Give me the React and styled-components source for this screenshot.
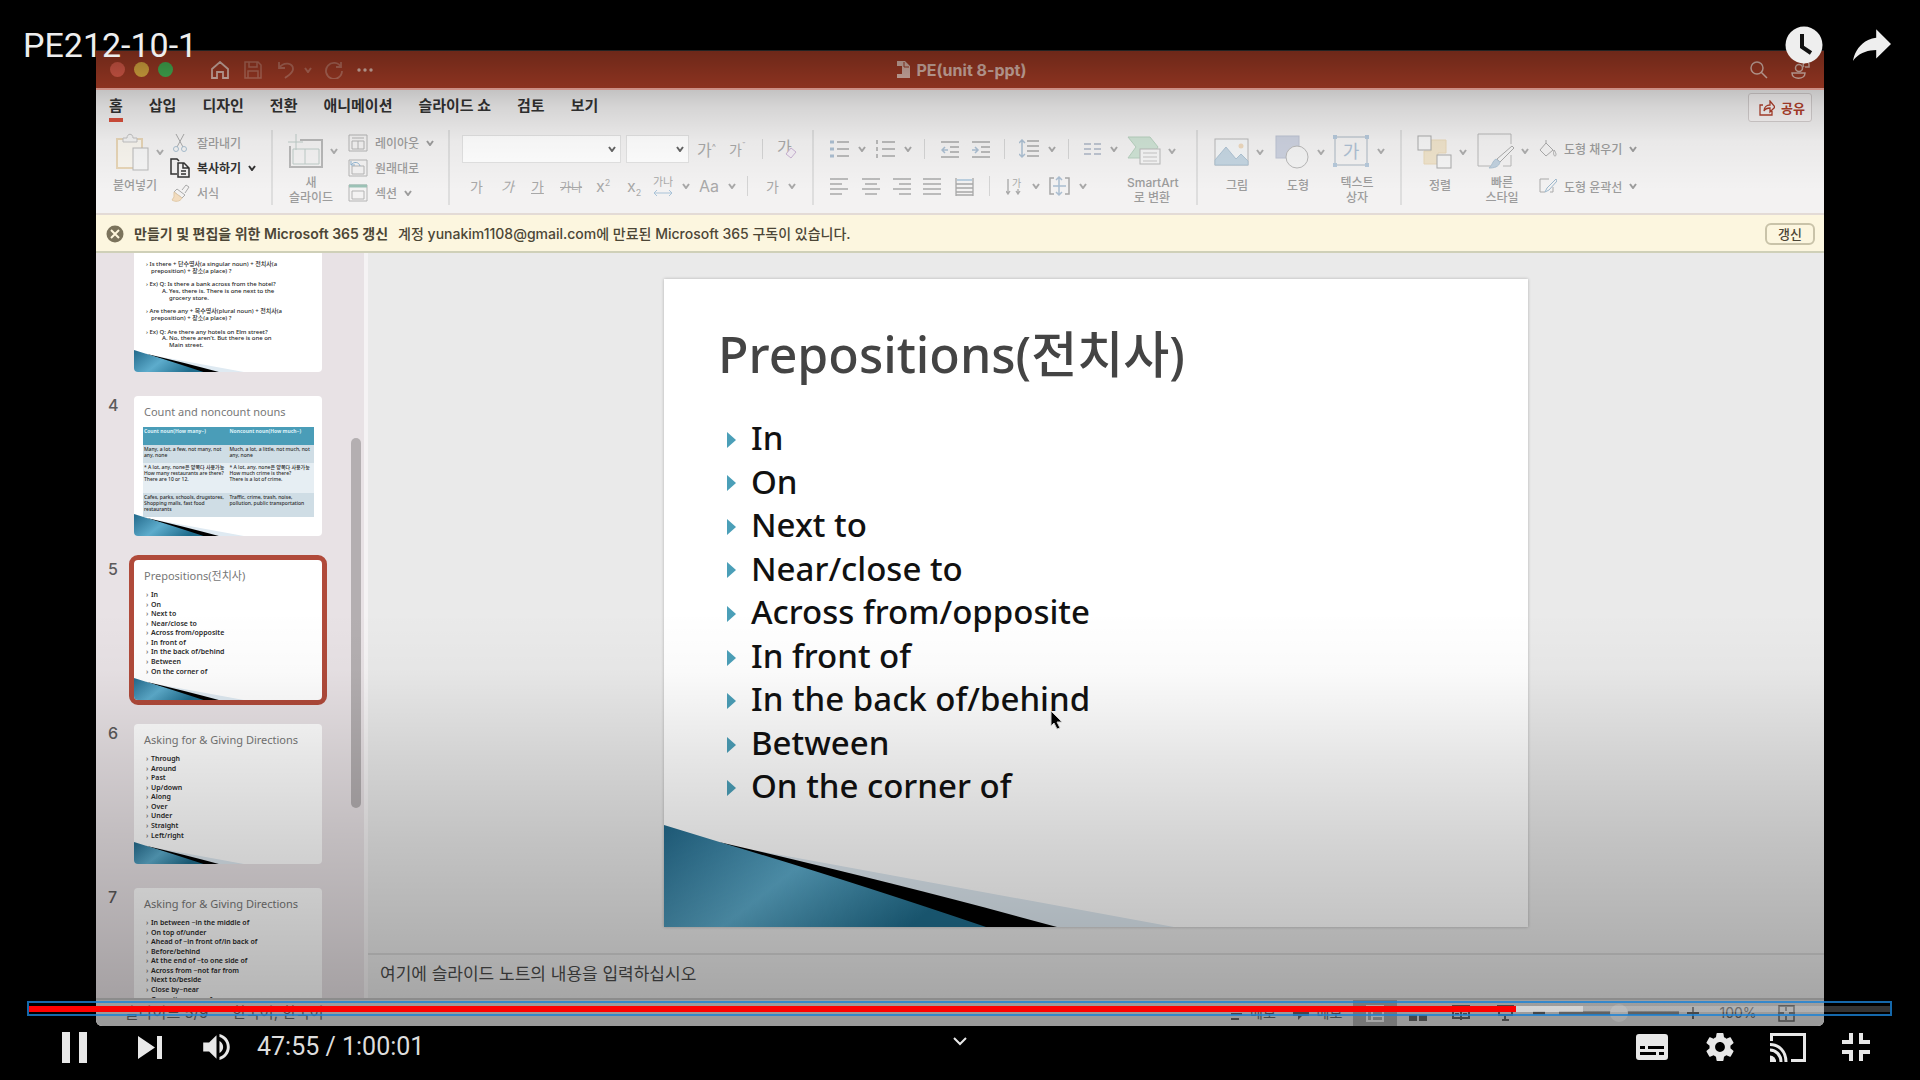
import React from "react";
import styled, { createGlobalStyle } from "styled-components";

const uiFont = `"Inter", "Noto Sans CJK KR", sans-serif`;
const slideFont = `"Noto Sans", "Noto Sans CJK KR", sans-serif`;

const GlobalStyle = createGlobalStyle`
  * { box-sizing: border-box; }
  body { margin: 0; background: #000; overflow: hidden; }
  button { font: inherit; color: inherit; background: none; border: 0; padding: 0; cursor: pointer; }
  svg { display: block; flex: none; }
`;

/* ---------- player shell ---------- */

const Player = styled.main`
  position: relative;
  display: flex;
  height: 100vh;
  background: #000;
  padding: 50px 5% 54px;
`;

const Video = styled.section`
  position: relative;
  flex: 1;
  min-width: 0;
  display: flex;
  flex-direction: column;
  overflow: hidden;
  border-top: 1px solid #222;
  border-radius: 0 0 6px 6px;
  background: #f3f2f2;
  font-family: ${uiFont};
  &::after {
    content: "";
    position: absolute;
    inset: 0;
    pointer-events: none;
    background: linear-gradient(
      to bottom,
      rgba(0, 0, 0, 0.38) 0,
      rgba(0, 0, 0, 0.2) 38px,
      rgba(0, 0, 0, 0.12) 56px,
      rgba(0, 0, 0, 0.04) 90px,
      rgba(0, 0, 0, 0) 140px,
      rgba(0, 0, 0, 0) 560px,
      rgba(0, 0, 0, 0.02) 620px,
      rgba(0, 0, 0, 0.1) 710px,
      rgba(0, 0, 0, 0.17) 790px,
      rgba(0, 0, 0, 0.23) 876px,
      rgba(0, 0, 0, 0.31) 976px
    );
  }
`;

const TopOverlay = styled.header`
  position: absolute;
  top: 0;
  left: 0;
  right: 0;
  display: flex;
  align-items: center;
  padding: 16px 14px 0 23px;
  height: 74px;
  color: #eee;
  font-family: Roboto, sans-serif;
`;

const VideoTitle = styled.h1`
  flex: 1;
  margin: 0;
  font-size: 34px;
  font-weight: 400;
  line-height: 40px;
`;

const PlayerButton = styled.button`
  width: ${(p) => p.$w || 68}px;
  height: 54px;
  display: flex;
  align-items: center;
  justify-content: center;
  color: #e8e8e8;
`;

const BottomOverlay = styled.footer`
  position: absolute;
  left: 27px;
  right: 28px;
  bottom: 0;
  height: 79px;
  font-family: Roboto, sans-serif;
`;

const Progress = styled.input`
  appearance: none;
  display: block;
  width: 100%;
  height: 15px;
  margin: 0;
  border: 2px solid rgba(26, 130, 214, 0.8);
  background: linear-gradient(
      to right,
      #f00 0 ${(p) => p.$played}%,
      rgba(255, 255, 255, 0.55) ${(p) => p.$played}% ${(p) => p.$loaded}%,
      rgba(255, 255, 255, 0.2) ${(p) => p.$loaded}%
    )
    center / 100% 6px no-repeat;
  &::-webkit-slider-thumb { appearance: none; width: 1px; height: 1px; }
`;

const Controls = styled.div`
  display: grid;
  grid-template-columns: 1fr auto 1fr;
  height: 62px;
`;

const ControlSide = styled.div`
  display: flex;
  align-items: center;
  padding-right: 2px;
  justify-content: ${(p) => (p.$end ? "flex-end" : "flex-start")};
`;

const Time = styled.span`
  margin-left: 3px;
  font-size: 25px;
  line-height: 30px;
  color: #ddd;
`;

/* ---------- presentation window ---------- */

const TitleBar = styled.div`
  display: grid;
  grid-template-columns: 1fr auto 1fr;
  align-items: center;
  height: 39px;
  padding: 0 12px 0 14px;
  background: #b04028;
  border-bottom: 2px solid #ffb5a8;
  color: #f0c8bc;
`;

const BarSide = styled.div`
  display: flex;
  align-items: center;
  justify-content: ${(p) => (p.$end ? "flex-end" : "flex-start")};
  gap: ${(p) => p.$gap || 0}px;
`;

const Light = styled.button`
  width: 15px;
  height: 15px;
  margin-right: 9px;
  border-radius: 50%;
  background: ${(p) => p.$c};
`;

const QuickButton = styled.button`
  margin-left: ${(p) => p.$ml || 0}px;
  opacity: ${(p) => (p.$dim ? 0.4 : 1)};
`;

const DocTitle = styled.h2`
  display: flex;
  align-items: center;
  gap: 7px;
  margin: 0;
  font: 700 16px/20px ${uiFont};
`;

const TabRow = styled.nav`
  display: flex;
  align-items: flex-start;
  height: 40px;
  padding: 4px 13px 0;
  color: #333;
`;

const Tab = styled.a`
  display: block;
  margin-right: 26px;
  padding: 1px 0 1px;
  font-size: 15px;
  font-weight: 700;
  line-height: 22px;
  color: inherit;
  text-decoration: none;
  border-bottom: 4px solid ${(p) => (p.$on ? "#d9503c" : "transparent")};
`;

const ShareButton = styled.button`
  display: flex;
  align-items: center;
  gap: 6px;
  height: 29px;
  margin: -1px -1px 0 auto;
  padding: 0 6px 0 10px;
  border: 1px solid #d5d0d0;
  border-radius: 3px;
  background: #fbf8f8;
  color: #b2402c;
  font-size: 13px;
  font-weight: 700;
`;

const Ribbon = styled.div`
  display: flex;
  height: 85px;
  border-bottom: 2px solid #e3dbd6;
  color: #9c9c9c;
`;

const Group = styled.div`
  display: flex;
  height: 75px;
  width: ${(p) => p.$w}px;
  padding-left: ${(p) => p.$pl || 0}px;
  border-right: ${(p) => (p.$last ? 0 : 2)}px solid #dedede;
`;

const BigTool = styled.button`
  display: flex;
  flex-direction: column;
  align-items: flex-start;
  width: ${(p) => p.$w}px;
`;

const BigIcon = styled.span`
  display: flex;
  align-items: center;
  gap: 7px;
  height: 44px;
  svg { opacity: 0.8; }
`;

const BigLabel = styled.span`
  width: ${(p) => p.$w || 46}px;
  padding-top: 4px;
  font-size: 12px;
  font-weight: 500;
  line-height: 15px;
  text-align: center;
  white-space: pre-line;
`;

const IconPad = styled.span`
  padding-left: 4px;
`;

const Column = styled.div`
  display: flex;
  flex-direction: column;
`;

const SmallTool = styled.button`
  display: flex;
  align-items: center;
  height: ${(p) => p.$h || 27}px;
  gap: 7px;
  font-size: 12px;
  font-weight: ${(p) => (p.$on ? 700 : 500)};
  color: ${(p) => (p.$on ? "#333" : "inherit")};
  white-space: nowrap;
`;

const ToolRow = styled.div`
  display: flex;
  align-items: center;
  height: 39px;
`;

const Tool = styled.button`
  display: flex;
  align-items: center;
  justify-content: flex-start;
  gap: 9px;
  width: ${(p) => p.$w}px;
  height: 26px;
  padding-left: ${(p) => p.$pl || 0}px;
  font-size: ${(p) => p.$fs || 14}px;
  font-style: ${(p) => (p.$italic ? "italic" : "normal")};
  text-decoration: ${(p) => p.$deco || "none"};
  white-space: nowrap;
  opacity: 0.85;
  sup, sub { font-size: 9px; line-height: 0; }
`;

const Rule = styled.span`
  width: 1px;
  height: 20px;
  margin-right: ${(p) => p.$mr}px;
  background: #d4d4d4;
`;

const SelectBox = styled.label`
  position: relative;
  display: block;
  width: ${(p) => p.$w}px;
  margin-right: ${(p) => p.$mr}px;
  svg { position: absolute; right: 5px; top: 11px; color: #666; pointer-events: none; }
`;

const Select = styled.select`
  appearance: none;
  display: block;
  width: 100%;
  height: 28px;
  border: 1px solid #e2e2e2;
  background: #fff;
`;

const Notice = styled.div`
  display: flex;
  align-items: center;
  height: 38px;
  padding: 1px 9px 0 10px;
  border-bottom: 2px solid #cfd0b8;
  background: #fcf6df;
  color: #4c4636;
  font-size: 14px;
  font-weight: 500;
  line-height: 20px;
  strong { margin: 0 10px; font-weight: 600; }
`;

const NoticeButton = styled.button`
  width: 50px;
  height: 22px;
  margin-left: auto;
  border: 2px solid #c9c3a9;
  border-radius: 6px;
  font-size: 13px;
  font-weight: 500;
  line-height: 16px;
`;

const Workspace = styled.div`
  flex: 1;
  min-height: 0;
  display: flex;
`;

const Panel = styled.aside`
  position: relative;
  width: 272px;
  overflow: hidden;
  background: #e8e2e5;
  border-right: 4px solid #f5f3f4;
`;

const Scrollbar = styled.span`
  position: absolute;
  top: 185px;
  right: 3px;
  width: 10px;
  height: 370px;
  border-radius: 5px;
  background: #b4afb1;
`;

const ThumbList = styled.ol`
  list-style: none;
  display: flex;
  flex-direction: column;
  gap: 24px;
  margin: -21px 0 0;
  padding: 0 0 0 12px;
`;

const ThumbItem = styled.li`
  display: flex;
  height: 140px;
`;

const ThumbNumber = styled.span`
  width: 26px;
  font-size: 16px;
  font-weight: 500;
  line-height: 18px;
  color: #5c5a5b;
`;

const Thumb = styled.a`
  position: relative;
  display: block;
  width: 188px;
  height: 140px;
  overflow: hidden;
  border-radius: 4px;
  background: #fff;
  color: #2a2a2a;
  text-decoration: none;
  font-family: ${slideFont};
  outline: ${(p) => (p.$on ? "5px solid #b04a3a" : "0")};
`;

const ThumbTitle = styled.h3`
  margin: 0;
  padding: 8px 0 0 10px;
  font-size: 11px;
  font-weight: 400;
  line-height: 16px;
  color: #777;
  white-space: nowrap;
`;

const ThumbBullets = styled.ul`
  list-style: none;
  margin: 0;
  padding: 6px 0 0 12px;
  font-size: 7px;
  font-weight: 600;
  line-height: 1.37;
  li::before { content: "›"; display: inline-block; width: 5px; color: #777; }
`;

const ThumbText = styled.p`
  margin: 0;
  padding-left: ${(p) => p.$in}px;
  padding-top: ${(p) => (p.$gap ? 7 : 0)}px;
  font-size: 6px;
  font-weight: 500;
  line-height: 1.11;
  white-space: nowrap;
`;

const ThumbBody = styled.div`
  padding-top: 29px;
`;

const MiniTable = styled.table`
  width: 171px;
  margin: 7px 0 0 9px;
  border-collapse: collapse;
  table-layout: fixed;
  font-size: 5px;
  line-height: 6px;
  th, td { padding: 1px; text-align: left; vertical-align: top; font-weight: 500; white-space: pre-line; }
  th { background: #4a9db8; color: #dff2f8; font-weight: 700; }
  tr:nth-child(even) td { background: #cfdde5; }
  tr:nth-child(odd) td { background: #e6eef3; }
`;

const MiniRow = styled.tr`
  height: ${(p) => p.$h}px;
`;

const Swoosh = styled.svg`
  position: absolute;
  left: 0;
  bottom: 0;
  width: 100%;
  height: auto;
`;

const Editor = styled.div`
  flex: 1;
  min-width: 0;
  display: flex;
  flex-direction: column;
  background: #eaeaea;
`;

const Stage = styled.div`
  flex: 1;
  min-height: 0;
  display: flex;
  align-items: center;
  justify-content: center;
`;

const Slide = styled.article`
  position: relative;
  width: 864px;
  aspect-ratio: 4 / 3;
  padding: 41px 54px;
  background: #fff;
  box-shadow: 0 0 3px rgba(0, 0, 0, 0.25);
  font-family: ${slideFont};
`;

const SlideTitle = styled.h2`
  margin: 0 0 28px;
  font-size: 50px;
  font-weight: 500;
  line-height: 68px;
  color: #444;
`;

const Bullets = styled.ul`
  list-style: none;
  margin: 0;
  padding: 0 0 0 9px;
  font-size: 33px;
  font-weight: 500;
  line-height: 1.32;
  color: #111;
`;

const Bullet = styled.li`
  display: flex;
  align-items: center;
  gap: 15px;
  &::before {
    content: "";
    margin-top: 4px;
    border-left: 9px solid #4b9fb8;
    border-top: 8px solid transparent;
    border-bottom: 8px solid transparent;
  }
`;

const Pointer = styled.svg`
  position: absolute;
  left: 386px;
  top: 431px;
`;

const Notes = styled.p`
  height: 45px;
  margin: 0;
  padding: 7px 12px;
  border-top: 2px solid #d6d6d6;
  font-size: 17px;
  line-height: 24px;
  color: #4a4a4a;
`;

const StatusBar = styled.div`
  display: flex;
  align-items: center;
  justify-content: space-between;
  height: 28px;
  padding: 0 29px;
  border-top: 2px solid #c4c4c4;
  background: #dedede;
  color: #666;
  font-size: 15px;
  line-height: 20px;
`;

const StatusSide = styled.div`
  display: flex;
  align-items: center;
  height: 26px;
`;

const StatusText = styled.span`
  margin-right: 24px;
`;

const StatusButton = styled.button`
  display: flex;
  align-items: center;
  justify-content: center;
  gap: 8px;
  width: ${(p) => p.$w}px;
  height: 26px;
  font-size: 14px;
  background: ${(p) => (p.$on ? "#aaa" : "none")};
`;

const Zoom = styled.input`
  appearance: none;
  width: 120px;
  height: 18px;
  margin: 0 8px;
  background: linear-gradient(#8a8a8a, #8a8a8a) center / 100% 4px no-repeat;
  &::-webkit-slider-thumb { appearance: none; width: 18px; height: 18px; border-radius: 50%; background: #f0f0f0; }
`;

/* ---------- drawings ---------- */

const Icon = ({ w = 20, h = w, vb = `0 0 ${w} ${h}`, fill = "none", stroke = "currentColor", sw = 1, children }) => (
  <svg width={w} height={h} viewBox={vb} fill={fill} stroke={stroke} strokeWidth={sw} aria-hidden="true">
    {children}
  </svg>
);

const Chevron = () => (
  <Icon w={8} h={6} sw={2}><path d="M1 1l3 4 3-4" /></Icon>
);

const Lines = ({ rows, w = 18, h = 19 }) => (
  <Icon w={w} h={h} sw={1.5}>
    {rows.map(([a, b], i) => <path key={i} d={`M${a} ${2 + i * 5}H${b}`} />)}
  </Icon>
);

const Decoration = () => (
  <Swoosh viewBox="0 0 864 102" aria-hidden="true">
    <defs>
      <linearGradient id="teal" x1="0" y1="0" x2="1" y2="0.4">
        <stop offset="0" stopColor="#22688a" />
        <stop offset="0.5" stopColor="#5daccc" />
        <stop offset="1" stopColor="#1f6c8c" />
      </linearGradient>
    </defs>
    <path d="M90 25L510 102H380Z" fill="#dfeaf2" />
    <path d="M55 17Q240 60 393 102H300Z" fill="#000" />
    <path d="M0 0L62 19Q180 54 322 102H0Z" fill="url(#teal)" />
  </Swoosh>
);

const PasteIcon = () => (
  <Icon w={33} h={38}>
    <rect x="1" y="6" width="25" height="29" stroke="#e5cfa8" strokeWidth="2" fill="#faf6ee" />
    <path d="M7 9V5h4c0-5 6-5 6 0h4v4z" fill="#f2f2f2" stroke="#b5b5b5" />
    <rect x="17" y="15" width="15" height="22" fill="#f6f6f6" stroke="#aaa" />
  </Icon>
);

const CutIcon = () => (
  <Icon w={20}><path d="M6 1l7 13M14 1L7 14" stroke="#aaa" /><circle cx="6" cy="16" r="2.5" stroke="#a9bfd0" /><circle cx="14" cy="16" r="2.5" stroke="#a9bfd0" /></Icon>
);

const CopyIcon = () => (
  <Icon w={20} sw={1.5}><path d="M7 16H1V1h6l2 2M8 5h6l5 5v9H8zM13 5v5h6M11 13h5M11 16h5" /></Icon>
);

const BrushIcon = () => (
  <Icon w={20}><path d="M12 7l4-5 3 2-4 6" stroke="#aaa" /><path d="M7 6l8 6-3 3-8-6z" stroke="#aaa" /><path d="M4 9l8 6c-2 4-7 4-10 2l2-3z" fill="#f2dcbf" stroke="#e0c9a8" /></Icon>
);

const NewSlideIcon = () => (
  <Icon w={35} h={34}><path d="M12 6h22v27H2V12" stroke="#aaa" strokeWidth="2" /><path d="M5 15h26v15H5zM17 15v15M8 0v16M0 8h15" stroke="#b2c4bf" /></Icon>
);

const LayoutIcon = ({ kind }) => (
  <Icon w={20} h={18}><path d="M1 1h18v16H1zM4 7h12v8H4z" stroke="#b4b4b4" />{kind === 0 && <path d="M4 4h12M10 7v8" stroke="#b4b4b4" />}{kind === 1 && <path d="M3 6c3-4 8-3 9 1M3 2v4h4" stroke="#8fb3d0" />}{kind === 2 && <path d="M1 2h18" stroke="#9cc2b6" strokeWidth="3" />}</Icon>
);

const SmartArtIcon = () => (
  <Icon w={34} h={30}><path d="M1 1h22l8 10-7 11H1l8-11z" fill="#c5dfcd" stroke="#a9c9b3" /><rect x="13" y="13" width="20" height="15" fill="#f6f6f6" stroke="#aaa" /><path d="M16 17h14M16 21h14M16 25h14" stroke="#bbb" /></Icon>
);

const PictureIcon = () => (
  <Icon w={35} h={28}><rect x="1" y="1" width="33" height="26" fill="#f4f6f8" stroke="#aaa" /><path d="M1 22L12 9l10 12 5-5 7 7v4H1z" fill="#b9cedd" stroke="#9db8cc" /><circle cx="27" cy="8" r="2.5" fill="#ecd3b2" stroke="none" /></Icon>
);

const ShapesIcon = () => (
  <Icon w={35} h={34}><rect x="1" y="1" width="23" height="22" fill="#c3cadb" stroke="#b0b8cc" /><circle cx="22" cy="22" r="11" fill="#f4f4f4" stroke="#aaa" /></Icon>
);

const TextBoxIcon = () => (
  <Icon w={38} h={34}><rect x="3" y="3" width="32" height="28" stroke="#9aa8b8" />{[[1, 1], [33, 1], [1, 29], [33, 29]].map(([x, y]) => <rect key={`${x}-${y}`} x={x} y={y} width="4" height="4" fill="#a8c0d6" stroke="none" />)}<text x="19" y="24" textAnchor="middle" fontSize="18" fill="#9db4cc" stroke="none">가</text></Icon>
);

const ArrangeIcon = () => (
  <Icon w={35} h={34}><path d="M14 5h15v13H21v11H7V16h7z" fill="#efe0c2" stroke="#e6d3ac" /><rect x="1" y="1" width="13" height="14" fill="#f6f6f6" stroke="#999" /><rect x="20" y="20" width="14" height="13" fill="#f6f6f6" stroke="#999" /></Icon>
);

const StyleIcon = () => (
  <Icon w={37} h={36}><path d="M14 33H1V1h33v10M34 22v11h-8" stroke="#aaa" /><path d="M35 13L20 26l3 3 14-14z" fill="#f4f4f4" stroke="#999" /><path d="M19 26l4 3c-1 5-6 6-11 6 4-3 3-7 7-9z" fill="#b5cadb" stroke="#9db8cc" /></Icon>
);

/* ---------- data ---------- */

const tabs = ["홈", "삽입", "디자인", "전환", "애니메이션", "슬라이드 쇼", "검토", "보기"];
const prepositions = ["In", "On", "Next to", "Near/close to", "Across from/opposite", "In front of", "In the back of/behind", "Between", "On the corner of"];
const directions = ["Through", "Around", "Past", "Up/down", "Along", "Over", "Under", "Straight", "Left/right"];
const places = ["In between ~in the middle of", "On top of/under", "Ahead of ~in front of/in back of", "Before/behind", "At the end of ~to one side of", "Across from ~not far from", "Next to/beside", "Close by~near", "Opposite~across from"];

const BulletThumb = ({ n, title, items, on }) => (
  <ThumbItem>
    <ThumbNumber>{n}</ThumbNumber>
    <Thumb href={`#slide-${n}`} $on={on}>
      <ThumbTitle>{title}</ThumbTitle>
      <ThumbBullets>{items.map((t) => <li key={t}>{t}</li>)}</ThumbBullets>
      <Decoration />
    </Thumb>
  </ThumbItem>
);

const Window = () => (
  <Video aria-label="Video">
    <TitleBar>
      <BarSide>
        <Light $c="#f06450" aria-label="close" />
        <Light $c="#f5bd48" aria-label="minimize" />
        <Light $c="#4cc45c" aria-label="zoom" />
        <QuickButton $ml={29} aria-label="home"><Icon w={18} sw={1.8}><path d="M1 8l8-7 8 7v9h-5v-6H6v6H1z" /></Icon></QuickButton>
        <QuickButton $ml={15} $dim aria-label="save"><Icon w={18} sw={1.5}><path d="M1 1h13l3 3v13H1zM5 1v5h8V1M4 17v-7h10v7" /></Icon></QuickButton>
        <QuickButton $ml={15} $dim aria-label="undo"><Icon w={18} sw={1.8}><path d="M2 1v6h6M2 7c5-7 14-5 14 1 0 4-4 6-8 9" /></Icon></QuickButton>
        <QuickButton $ml={9} $dim aria-label="undo list"><Chevron /></QuickButton>
        <QuickButton $ml={12} $dim aria-label="redo"><Icon w={19} sw={1.8}><path d="M17 2v5h-5M17 7a8 8 0 1 0 1 4" /></Icon></QuickButton>
        <QuickButton $ml={14} aria-label="more"><Icon w={17} h={4} fill="currentColor" stroke="none"><circle cx="2" cy="2" r="1.7" /><circle cx="8" cy="2" r="1.7" /><circle cx="14" cy="2" r="1.7" /></Icon></QuickButton>
      </BarSide>
      <DocTitle>
        <Icon w={14} h={17} fill="currentColor" stroke="none"><path d="M1 0h8l5 5v12H1v-4h5V5H1z" /><path d="M2 7h3v4H2z" fill="#b04028" /><path d="M8 1v5h5" fill="none" stroke="#b04028" /></Icon>
        PE(unit 8-ppt)
      </DocTitle>
      <BarSide $end $gap={22}>
        <button aria-label="search"><Icon w={18} sw={1.5}><circle cx="7" cy="7" r="6" /><path d="M11 11l6 6" /></Icon></button>
        <button aria-label="collaborate"><Icon w={22} h={20} sw={1.5}><circle cx="9" cy="8" r="3.5" /><path d="M2 13h13c0 7-13 7-13 0zM14 7a3 3 0 1 1 5-3v3h-4" /></Icon></button>
      </BarSide>
    </TitleBar>

    <TabRow>
      {tabs.map((t, i) => <Tab key={t} href="#ribbon" $on={i === 0}>{t}</Tab>)}
      <ShareButton><Icon w={16} h={16} sw={1.3}><path d="M4 5H1v10h12v-4M5 11c0-4 3-6 6-6V1l5 6-5 5V8c-3 0-5 1-6 3z" /></Icon>공유</ShareButton>
    </TabRow>

    <Ribbon id="ribbon">
      <Group $w={177} $pl={16}>
        <BigTool $w={58}><BigIcon><IconPad><PasteIcon /></IconPad><Chevron /></BigIcon><BigLabel>붙여넣기</BigLabel></BigTool>
        <Column>
          <SmallTool><CutIcon />잘라내기</SmallTool>
          <SmallTool $on><CopyIcon />복사하기 <Chevron /></SmallTool>
          <SmallTool><BrushIcon />서식</SmallTool>
        </Column>
      </Group>
      <Group $w={177} $pl={15}>
        <BigTool $w={60}><BigIcon><NewSlideIcon /><Chevron /></BigIcon><BigLabel>{"새\n슬라이드"}</BigLabel></BigTool>
        <Column>
          <SmallTool><LayoutIcon kind={0} />레이아웃 <Chevron /></SmallTool>
          <SmallTool><LayoutIcon kind={1} />원래대로</SmallTool>
          <SmallTool><LayoutIcon kind={2} />섹션 <Chevron /></SmallTool>
        </Column>
      </Group>
      <Group $w={364} $pl={12}>
        <Column>
          <ToolRow>
            <SelectBox $w={159} $mr={5}><Select aria-label="font"><option /></Select><Chevron /></SelectBox>
            <SelectBox $w={63} $mr={8}><Select aria-label="font size"><option /></Select><Chevron /></SelectBox>
            <Tool $w={32} $fs={16}><span>가<sup>^</sup></span></Tool>
            <Tool $w={33}><span>가<sup>ˇ</sup></span></Tool>
            <Rule $mr={14} />
            <Tool $w={20} aria-label="clear formatting"><Icon w={21} h={22}><text x="0" y="15" fontSize="16" fill="currentColor" stroke="none">가</text><path d="M9 16l5-6 5 4-5 6z" stroke="#c3a9cf" fill="#f3eef5" /></Icon></Tool>
          </ToolRow>
          <ToolRow>
            <Tool $w={39} $pl={8}>가</Tool>
            <Tool $w={30} $italic>가</Tool>
            <Tool $w={29} $deco="underline">가</Tool>
            <Tool $w={36} $deco="line-through" $fs={12}>가나</Tool>
            <Tool $w={31} $fs={16}><span>x<sup>2</sup></span></Tool>
            <Tool $w={26} $fs={16}><span>x<sub>2</sub></span></Tool>
            <Tool $w={46} aria-label="character spacing"><Icon w={20} h={24}><text x="0" y="12" fontSize="11" fill="currentColor" stroke="none">가나</text><path d="M1 19h18M4 16l-3 3 3 3M16 16l3 3-3 3" stroke="#9dbbd4" /></Icon><Chevron /></Tool>
            <Tool $w={48} $fs={16}>Aa<Chevron /></Tool>
            <Rule $mr={18} />
            <Tool $w={36}>가<Chevron /></Tool>
          </ToolRow>
        </Column>
      </Group>
      <Group $w={384} $pl={16}>
        <Column>
          <ToolRow>
            <Tool $w={46} aria-label="bullets"><Icon w={19} sw={1.5}><path d="M7 3h12M7 10h12M7 17h12" /><path d="M0 3h4M0 10h4M0 17h4" stroke="#9fb6cc" strokeWidth="3" /></Icon><Chevron /></Tool>
            <Tool $w={48} aria-label="numbering"><Icon w={19} sw={1.5}><path d="M6 3h13M6 10h13M6 17h13M1 1v4M1 8v4M1 15v4" /></Icon><Chevron /></Tool>
            <Rule $mr={16} />
            <Tool $w={31} aria-label="outdent"><Icon w={18} sw={1.5}><path d="M0 2h18M9 7h9M9 12h9M0 17h18" /><path d="M7 10H1M4 7l-3 3 3 3" stroke="#9fb6cc" /></Icon></Tool>
            <Tool $w={32} aria-label="indent"><Icon w={18} sw={1.5}><path d="M0 2h18M9 7h9M9 12h9M0 17h18" /><path d="M0 10h6M3 7l3 3-3 3" stroke="#9fb6cc" /></Icon></Tool>
            <Rule $mr={14} />
            <Tool $w={49} aria-label="line spacing"><Icon w={20} sw={1.5}><path d="M8 2h12M8 7h12M8 12h12M8 17h12" /><path d="M3 1v17M0 4l3-3 3 3M0 15l3 3 3-3" stroke="#9fb6cc" /></Icon><Chevron /></Tool>
            <Rule $mr={15} />
            <Tool $w={43} aria-label="columns"><Icon w={17} h={14} sw={2} stroke="#b4bccb"><path d="M0 2h7M0 7h7M0 12h7M10 2h7M10 7h7M10 12h7" /></Icon><Chevron /></Tool>
          </ToolRow>
          <ToolRow>
            <Tool $w={32} aria-label="align left"><Lines rows={[[0, 18], [0, 12], [0, 18], [0, 12]]} /></Tool>
            <Tool $w={31} aria-label="align center"><Lines rows={[[0, 18], [3, 15], [0, 18], [3, 15]]} /></Tool>
            <Tool $w={30} aria-label="align right"><Lines rows={[[0, 18], [6, 18], [0, 18], [6, 18]]} /></Tool>
            <Tool $w={32} aria-label="justify"><Lines rows={[[0, 18], [0, 18], [0, 18], [0, 18]]} /></Tool>
            <Tool $w={34} aria-label="distribute"><Icon w={19} sw={1.3}><path d="M1 7h17M1 11h17M1 15h17M1 18h17M1 1v18M18 1v18" /><path d="M2 3h15" stroke="#8fb3d0" /></Icon></Tool>
            <Rule $mr={16} />
            <Tool $w={43} aria-label="text direction"><Icon w={17} sw={1.3}><path d="M2 1v15M0 13l2 3 2-3M12 11v5M10 13l2 3 2-3" /><text x="6" y="9" fontSize="10" fill="currentColor" stroke="none">가</text></Icon><Chevron /></Tool>
            <Tool $w={44} aria-label="align text"><Icon w={21} sw={1.5}><path d="M5 2H1v16h4M16 2h4v16h-4" /><path d="M4 10h13M10 1v18M7 4l3-3 3 3M7 16l3 3 3-3" stroke="#9fb6cc" /></Icon><Chevron /></Tool>
          </ToolRow>
        </Column>
        <BigTool $w={60}><BigIcon><SmartArtIcon /><Chevron /></BigIcon><BigLabel $w={50}>{"SmartArt\n로 변환"}</BigLabel></BigTool>
      </Group>
      <Group $w={204} $pl={16}>
        <BigTool $w={61}><BigIcon><PictureIcon /><Chevron /></BigIcon><BigLabel>그림</BigLabel></BigTool>
        <BigTool $w={57}><BigIcon><ShapesIcon /><Chevron /></BigIcon><BigLabel>도형</BigLabel></BigTool>
        <BigTool $w={58}><BigIcon><TextBoxIcon /><Chevron /></BigIcon><BigLabel $w={50}>{"텍스트\n상자"}</BigLabel></BigTool>
      </Group>
      <Group $w={340} $pl={15} $last>
        <BigTool $w={60}><BigIcon><ArrangeIcon /><Chevron /></BigIcon><BigLabel>정렬</BigLabel></BigTool>
        <BigTool $w={62}><BigIcon><StyleIcon /><Chevron /></BigIcon><BigLabel $w={50}>{"빠른\n스타일"}</BigLabel></BigTool>
        <Column>
          <SmallTool $h={39}><Icon w={18}><path d="M7 3l7 7-7 6-6-6zM7 3V0M15 10c3 4 2 6 1 6s-2-2-1-6z" stroke="#aaa" /></Icon>도형 채우기 <Chevron /></SmallTool>
          <SmallTool $h={39}><Icon w={18}><path d="M10 2H1v13h5M14 10v5h-3" stroke="#aaa" /><path d="M17 2l-9 9-2 4 4-2 8-9z" stroke="#9db8cc" /></Icon>도형 윤곽선 <Chevron /></SmallTool>
        </Column>
      </Group>
    </Ribbon>

    <Notice>
      <Icon w={18} stroke="none"><circle cx="9" cy="9" r="8.5" fill="#7b735c" /><path d="M5 5l8 8M13 5l-8 8" stroke="#fff6dc" strokeWidth="2" /></Icon>
      <strong>만들기 및 편집을 위한 Microsoft 365 갱신</strong>
      <span>계정 yunakim1108@gmail.com에 만료된 Microsoft 365 구독이 있습니다.</span>
      <NoticeButton>갱신</NoticeButton>
    </Notice>

    <Workspace>
      <Panel>
        <ThumbList>
          <ThumbItem>
            <ThumbNumber />
            <Thumb href="#slide-3">
              <ThumbBody>
                <ThumbText $in={12}>› Is there + 단수명사(a singular noun) + 전치사(a</ThumbText>
                <ThumbText $in={17}>preposition) + 장소(a place) ?</ThumbText>
                <ThumbText $in={12} $gap>› Ex) Q: Is there a bank across from the hotel?</ThumbText>
                <ThumbText $in={28}>A. Yes, there is. There is one next to the</ThumbText>
                <ThumbText $in={35}>grocery store.</ThumbText>
                <ThumbText $in={12} $gap>› Are there any + 복수명사(plural noun) + 전치사(a</ThumbText>
                <ThumbText $in={17}>preposition) + 장소(a place) ?</ThumbText>
                <ThumbText $in={12} $gap>› Ex) Q: Are there any hotels on Elm street?</ThumbText>
                <ThumbText $in={28}>A. No, there aren’t. But there is one on</ThumbText>
                <ThumbText $in={35}>Main street.</ThumbText>
              </ThumbBody>
              <Decoration />
            </Thumb>
          </ThumbItem>
          <ThumbItem>
            <ThumbNumber>4</ThumbNumber>
            <Thumb href="#slide-4">
              <ThumbTitle>Count and noncount nouns</ThumbTitle>
              <MiniTable>
                <tbody>
                  <MiniRow $h={18}><th>Count noun(How many~)</th><th>Noncount noun(How much~)</th></MiniRow>
                  <MiniRow $h={18}><td>{"Many, a lot, a few, not many, not\nany, none"}</td><td>{"Much, a lot, a little, not much, not\nany, none"}</td></MiniRow>
                  <MiniRow $h={30}><td>{"* A lot, any, none은 양쪽다 사용가능\nHow many restaurants are there?\nThere are 10 or 12."}</td><td>{"* A lot, any, none은 양쪽다 사용가능\nHow much crime is there?\nThere is a lot of crime."}</td></MiniRow>
                  <MiniRow $h={24}><td>{"Cafes, parks, schools, drugstores,\nShopping malls, fast food\nrestaurants"}</td><td>{"Traffic, crime, trash, noise,\npollution, public transportation"}</td></MiniRow>
                </tbody>
              </MiniTable>
              <Decoration />
            </Thumb>
          </ThumbItem>
          <BulletThumb n={5} on title="Prepositions(전치사)" items={prepositions} />
          <BulletThumb n={6} title="Asking for & Giving Directions" items={directions} />
          <BulletThumb n={7} title="Asking for & Giving Directions" items={places} />
        </ThumbList>
        <Scrollbar />
      </Panel>
      <Editor>
        <Stage>
          <Slide>
            <SlideTitle>Prepositions(전치사)</SlideTitle>
            <Bullets>{prepositions.map((t) => <Bullet key={t}>{t}</Bullet>)}</Bullets>
            <Decoration />
            <Pointer width="13" height="21" viewBox="0 0 13 21" aria-hidden="true"><path d="M1 1v15l3-3 3 6 3-1-3-6h5z" fill="#000" stroke="#ddd" /></Pointer>
          </Slide>
        </Stage>
        <Notes>여기에 슬라이드 노트의 내용을 입력하십시오</Notes>
      </Editor>
    </Workspace>

    <StatusBar>
      <StatusSide>
        <StatusText>슬라이드 5/9</StatusText>
        <StatusText>한국어, 한국어</StatusText>
      </StatusSide>
      <StatusSide>
        <StatusButton $w={57}><Icon w={11} h={13} sw={2}><path d="M0 2h11M0 7h11M0 12h8" /></Icon>메모</StatusButton>
        <StatusButton $w={71}><Icon w={16} h={13} fill="currentColor" stroke="none"><path d="M0 0h16v9H9l-4 4V9H0z" /></Icon>메모</StatusButton>
        <StatusButton $w={44} $on aria-label="normal view"><Icon w={18} h={17} sw={2} stroke="#eee"><path d="M1 1h16v15H1zM6 1v15M6 11h11" /></Icon></StatusButton>
        <StatusButton $w={42} aria-label="slide sorter"><Icon w={18} h={15} fill="currentColor" stroke="none"><path d="M0 0h8v6H0zM10 0h8v6h-8zM0 9h8v6H0zM10 9h8v6h-8z" /></Icon></StatusButton>
        <StatusButton $w={44} aria-label="reading view"><Icon w={18} h={16} sw={2}><path d="M1 1h16v12H1zM9 1v14M3 5h4M3 9h4M11 5h4M11 9h4" /></Icon></StatusButton>
        <StatusButton $w={44} aria-label="slide show"><Icon w={17} h={16} sw={2}><path d="M0 1h17M2 1v9h13V1M8 10v5M5 15h7" /></Icon></StatusButton>
        <StatusButton $w={24} aria-label="zoom out"><Icon w={12} sw={3}><path d="M0 6h12" /></Icon></StatusButton>
        <Zoom type="range" aria-label="zoom" defaultValue={50} />
        <StatusButton $w={12} aria-label="zoom in"><Icon w={12} sw={2}><path d="M0 6h12M6 0v12" /></Icon></StatusButton>
        <StatusButton $w={78}>100%</StatusButton>
        <StatusButton $w={18} aria-label="fit"><Icon w={17} sw={1.5}><path d="M1 1h15v15H1zM8 2v4M8 11v4M2 8h4M11 8h4" /></Icon></StatusButton>
      </StatusSide>
    </StatusBar>
  </Video>
);

export default function App() {
  return (
    <>
      <GlobalStyle />
      <Player>
        <Window />
        <TopOverlay>
          <VideoTitle>PE212-10-1</VideoTitle>
          <PlayerButton aria-label="Watch later">
            <Icon w={38} stroke="none"><circle cx="19" cy="19" r="18.5" fill="#eee" /><path d="M17 8v13l9 6" fill="none" stroke="#111" strokeWidth="4" /></Icon>
          </PlayerButton>
          <PlayerButton aria-label="Share">
            <Icon w={38} h={32} vb="8 9.7 20 16.6" fill="#eee" stroke="none"><path d="m20.21 14.19 0-4.45 7.79 7.79-7.79 7.62 0-4.56C16.27 20.69 12.1 21.81 9.34 24.76 8.8 25.13 7.6 27.29 8.12 25.65 9.08 21.41 11.8 17.32 15.98 15.38c1.32-.6 2.76-.95 4.23-1.19z" /></Icon>
          </PlayerButton>
        </TopOverlay>
        <BottomOverlay>
          <Progress type="range" aria-label="Seek" min={0} max={3601} defaultValue={2875} $played={79.9} $loaded={83.5} />
          <Controls>
            <ControlSide>
              <PlayerButton $w={95} aria-label="Pause"><Icon w={25} h={31} fill="currentColor" stroke="none"><path d="M0 0h8v31H0zM17 0h8v31h-8z" /></Icon></PlayerButton>
              <PlayerButton $w={56} aria-label="Next"><Icon w={24} h={23} fill="currentColor" stroke="none"><path d="M0 0l17 11.5L0 23zM19 0h5v23h-5z" /></Icon></PlayerButton>
              <PlayerButton $w={76} aria-label="Mute"><Icon w={27} h={26} vb="8 9.2 18 17.6" fill="currentColor" stroke="none"><path d="M8 21h4l5 5V10l-5 5H8zM19 14v8c1.48-.68 2.5-2.23 2.5-4S20.48 14.74 19 14zM19 11.29C21.89 12.15 24 14.83 24 18s-2.11 5.85-5 6.71v2.06c4.01-.91 7-4.49 7-8.77s-2.99-7.86-7-8.77z" /></Icon></PlayerButton>
              <Time>47:55 / 1:00:01</Time>
            </ControlSide>
            <PlayerButton $w={40} aria-label="More videos"><Icon w={14} h={14} sw={2}><path d="M1 2l6 6 6-6" /></Icon></PlayerButton>
            <ControlSide $end>
              <PlayerButton aria-label="Subtitles"><Icon w={32} h={26} fill="currentColor" stroke="none"><path fillRule="evenodd" d="M3 0h26a3 3 0 0 1 3 3v20a3 3 0 0 1-3 3H3a3 3 0 0 1-3-3V3a3 3 0 0 1 3-3zM4 12v3h5v-3zM12 12v3h16v-3zM4 18v3h16v-3zM23 18v3h5v-3z" /></Icon></PlayerButton>
              <PlayerButton aria-label="Settings"><Icon w={28} vb="10 10 16 16" fill="currentColor" stroke="none"><path d="m23.94 18.78c.03-.25.05-.51.05-.78 0-.27-.02-.52-.05-.78l1.68-1.32c.15-.12.19-.33.09-.51l-1.6-2.76c-.09-.17-.31-.24-.48-.17l-1.99.8c-.41-.32-.86-.58-1.35-.78l-.3-2.12c-.02-.19-.19-.33-.39-.33l-3.2 0c-.2 0-.36.14-.39.33l-.3 2.12c-.48.2-.93.47-1.35.78l-1.99-.8c-.18-.07-.39 0-.48.17l-1.6 2.76c-.1.17-.05.39.09.51l1.68 1.32c-.03.25-.05.52-.05.78 0 .26.02.52.05.78l-1.68 1.32c-.15.12-.19.33-.09.51l1.6 2.76c.09.17.31.24.48.17l1.99-.8c.41.32.86.58 1.35.78l.3 2.12c.02.19.19.33.39.33l3.2 0c.2 0 .36-.14.39-.33l.3-2.12c.48-.2.93-.47 1.35-.78l1.99.8c.18.07.39 0 .48-.17l1.6-2.76c.09-.17.05-.39-.09-.51l-1.68-1.32zm-5.94 2.01c-1.54 0-2.8-1.25-2.8-2.8 0-1.54 1.25-2.8 2.8-2.8 1.54 0 2.8 1.25 2.8 2.8 0 1.54-1.25 2.8-2.8 2.8z" /></Icon></PlayerButton>
              <PlayerButton aria-label="Cast"><Icon w={36} h={29} sw={3}><path d="M1.5 8V1.5h33v26H21M0 11.5c9 0 16 7 16 17.500M0 17c6 0 11 5 11 12" /><path d="M0 22.500a6 6 0 0 1 6 6.500H0z" fill="currentColor" stroke="none" /></Icon></PlayerButton>
              <PlayerButton aria-label="Exit full screen"><Icon w={28} h={28} sw={4}><path d="M9 0v9H0M19 0v9h9M9 28v-9H0M19 28v-9h9" /></Icon></PlayerButton>
            </ControlSide>
          </Controls>
        </BottomOverlay>
      </Player>
    </>
  );
}
